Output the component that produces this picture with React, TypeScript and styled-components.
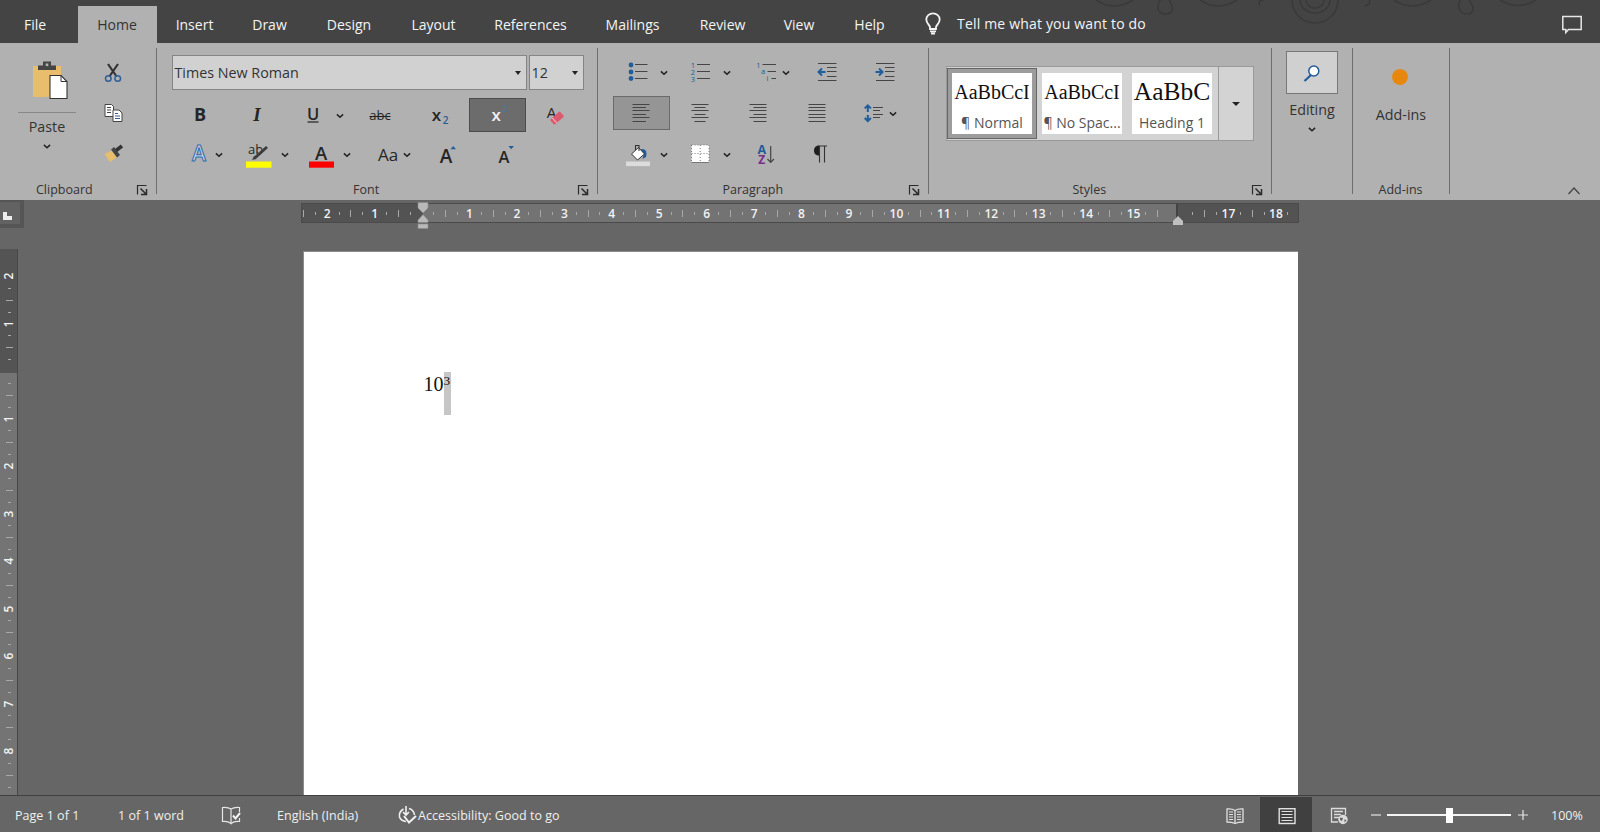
import type { ReactNode } from 'react';
import styled, { createGlobalStyle, css } from 'styled-components';


const MENU = [
  { title: 'File', left: 24, width: 22 },
  { title: 'Home', left: 32, width: 79, active: true },
  { title: 'Insert', left: 19, width: 37 },
  { title: 'Draw', left: 39, width: 35 },
  { title: 'Design', left: 39, width: 46 },
  { title: 'Layout', left: 39, width: 45 },
  { title: 'References', left: 39, width: 71 },
  { title: 'Mailings', left: 38, width: 57 },
  { title: 'Review', left: 38, width: 47 },
  { title: 'View', left: 37, width: 32 },
  { title: 'Help', left: 39, width: 31 },
];

const range = (from: number, to: number) => Array.from({ length: to - from + 1 }, (_, i) => from + i)

type IconPropsType = {
  w?: number
  h?: number
  children: ReactNode
}

// every icon is drawn round its own centre
const Icon = ({ w = 30, h = 34, children }: IconPropsType) => (
  <Svg width={ w } height={ h } viewBox={ `${ -w / 2 } ${ -h / 2 } ${ w } ${ h }` }>{ children }</Svg>
);

type CaretPropsType = {
  ml?: number
  h?: number
}

const Caret = ({ ml = 0, h = 34 }: CaretPropsType) => (
  <Tool $ml={ ml } $w={ 10 }>
    <Icon w={ 10 } h={ h }><path d="M-3.1 -.6 L0 2.3 L3.1 -.6" fill="none" stroke="#222" strokeWidth="1.5"/></Icon>
  </Tool>
);

const Launcher = () => (
  <Icon w={ 12 } h={ 12 }>
    <path d="M-4.5 4.5V-4.5H4.5" fill="none" stroke="#2b2b2b" strokeWidth="1.2"/>
    <path d="M-1.5 -1.5L4 4M4.5 -1V4.5H-1" fill="none" stroke="#2b2b2b" strokeWidth="1.5"/>
  </Icon>
);

type LinesPropsType = {
  rows: [number, number, number][]
}

const Lines = ({ rows }: LinesPropsType) => (
  <path d={ rows.map(([x1, x2, y]) => `M${ x1 } ${ y }H${ x2 }`).join('') } stroke="#454545" strokeWidth="1"/>
);

type MarksPropsType = {
  from: number
  to: number
  vertical?: boolean
  hidden?: number[]
}

const Marks = ({ from, to, vertical, hidden = [0] }: MarksPropsType) => (
  <>
    { range(from, to).map(k => (
      <Mark key={ k } $vertical={ vertical }>
        { hidden.includes(k) ? null : k % 4 === 0
          ? <Digit $vertical={ vertical }>{ Math.abs(k / 4) }</Digit>
          : <Tick $long={ k % 2 === 0 } $vertical={ vertical }/> }
      </Mark>
    )) }
  </>
);

const TitleBar = () => (
  <Bar>
    { MENU.map(item => (
      <Tab key={ item.title } $left={ item.left } $width={ item.width } $active={ item.active }>{ item.title }</Tab>
    )) }
    <Bulb>
      <Icon w={ 20 } h={ 26 }>
        <path d="M-3 5V3C-3.5 1-6.7-1-6.7-4.5A6.7 6.2 0 0 1 6.7-4.5C6.7-1 3.5 1 3 3V5Z" fill="none" stroke="#f4f4f4" strokeWidth="1.8"/>
        <path d="M-3 7.3H3M-2 9.5H2" stroke="#f4f4f4" strokeWidth="1.8"/>
      </Icon>
    </Bulb>
    <Search>Tell me what you want to do</Search>
    <Ornament width="480" height="43" viewBox="0 0 480 43" fill="none" stroke="#3a3a3a" strokeWidth="1.6">
      <path d="M36 0Q54 12 73 0M100 0C96 8 98 14 106 14S114 7 109 0M140 0Q158 12 177 0M200 6Q197 0 204 0M232 0A23 23 0 0 0 278 0M240 0A15 13 0 0 0 270 0M246 0A9 8 0 0 0 264 0M305 6Q312 4 309 0M334 0Q352 12 371 0M400 0C397 8 400 14 407 14S415 7 409 0M440 0Q458 11 476 0"/>
    </Ornament>
    <Comment>
      <Icon w={ 22 } h={ 20 }>
        <path d="M-9.2-7.5H9.2V5.5H-3.5L-6.2 8.5V5.5H-9.2Z" fill="none" stroke="#e6e6e6" strokeWidth="1.5"/>
      </Icon>
    </Comment>
  </Bar>
);

const Clipboard = () => (
  <Group $w={ 156 }>
    <Body $row>
      <Paste>
        <PasteIcon>
          <Icon w={ 40 } h={ 42 }>
            <path d="M-17-14H11V17H-17Z" fill="#e8bd6c"/>
            <path d="M-12-10V-14.5H-7V-18.5H1V-14.5H6V-10Z" fill="#444"/>
            <rect x="-4.3" y="-16.5" width="2.6" height="2.6" fill="#b1b1b1"/>
            <path d="M0-4.5H11L17 1.5V18.5H0Z" fill="#fff" stroke="#333" strokeWidth="1.1"/>
            <path d="M11-4.5V1.5H17" fill="none" stroke="#333" strokeWidth="1"/>
          </Icon>
        </PasteIcon>
        <Rule/>
        <BigLabel $top={ 3.5 }>Paste</BigLabel>
        <Caret h={ 17 }/>
      </Paste>
      <Stack>
        <Icon h={ 40 }>
          <path d="M-5-9L3.6 3.5M5-9L-3.6 3.5" stroke="#333" strokeWidth="2.2"/>
          <g fill="none" stroke="#2f5f9a" strokeWidth="1.5"><circle cx="-4.7" cy="5.5" r="2.8"/><circle cx="4.7" cy="5.5" r="2.8"/></g>
        </Icon>
        <Icon h={ 40 }>
          <g fill="#fff" stroke="#444" strokeWidth="1">
            <path d="M-8-8.5H-1.5L.5-6.5V3.5H-8Z"/><path d="M0-3H6L9 0V8.5H0Z"/>
          </g>
          <path d="M-6-5.5H-2M-6-3H-2M-6-.5H-2" stroke="#444"/>
          <path d="M2 .5H5M2 3H7M2 5.5H7" stroke="#2f5f9a"/>
        </Icon>
        <Icon h={ 40 }>
          <g transform="translate(1 .5)">
            <path d="M-9.5 .5L-2.5-3L3 4L-4 8.5Q-7 4-9.5 .5Z" fill="#e8bd6c"/>
            <path d="M-3-4L0-6.5L6 1.5L3 4Z" fill="#444"/>
            <path d="M2-3L8-7.5" stroke="#333" strokeWidth="3.6"/>
          </g>
        </Icon>
      </Stack>
    </Body>
    <Footer><FooterLabel $left={ 36 } $w={ 58 }>Clipboard</FooterLabel><Launcher/></Footer>
  </Group>
);

const Font = () => (
  <Group $w={ 440 }>
    <Body>
      <Combos>
        <Combo $w={ 355 }>Times New Roman<Arrow/></Combo>
        <Combo $w={ 55 }>12<Arrow/></Combo>
      </Combos>
      <Row $top={ 7.5 }>
        <Tool $ml={ 28 }><Icon><Glyph y="5.6" $size={ 18 } $bold>B</Glyph></Icon></Tool>
        <Tool $ml={ 27 }><Icon><Glyph y="5.6" $size={ 19 } $bold $serif $italic>I</Glyph></Icon></Tool>
        <Tool $ml={ 26 }><Icon><Glyph y="4.8" $size={ 16.5 } $semi>U</Glyph><path d="M-5.5 7H5.5" stroke="#222" strokeWidth="1.2"/></Icon></Tool>
        <Caret ml={ 7 }/>
        <Tool $ml={ 20 }><Icon><Glyph y="5" $size={ 13 }>abc</Glyph><path d="M-10.5 1.5H10.5" stroke="#222" strokeWidth="1.1"/></Icon></Tool>
        <Tool $ml={ 30 }><Icon><Glyph x="-3.5" y="5.5" $size={ 17 } $semi>x</Glyph><Glyph x="5.5" y="9" $size={ 10 } $fill="#205d9b" $semi>2</Glyph></Icon></Tool>
        <Pressed $ml={ 14 } $dark>
          <Icon w={ 54 } h={ 30 }><Glyph x="-1.8" y="5.5" $size={ 17 } $fill="#f2f2f2" $semi>x</Glyph><Glyph x="7" y="-3" $size={ 9.5 } $fill="#4677ad">2</Glyph></Icon>
        </Pressed>
        <Tool $ml={ 15 }>
          <Icon>
            <Glyph x="-3.5" y="2.5" $size={ 15 }>A</Glyph>
            <g transform="translate(2 3) rotate(-42)"><rect x="-6.5" y="-3.3" width="13" height="6.8" rx="1" fill="#db5a6e"/><path d="M-3.5-3.3V3.5" stroke="#f0b6bf"/></g>
          </Icon>
        </Tool>
      </Row>
      <Row $top={ 5.5 }>
        <Tool $ml={ 27 }><Icon><Outline y="7.4">A</Outline></Icon></Tool>
        <Caret/>
        <Tool $ml={ 19 }>
          <Icon>
            <Glyph x="-2.5" y="-.5" $size={ 13 }>ab</Glyph>
            <path d="M-3.5 4.2L9-7" stroke="#3d3d3d" strokeWidth="3"/><path d="M-6 6L-4 2.3L-1.5 5Z" fill="#3d3d3d"/>
            <rect x="-12" y="7.5" width="25.5" height="6.2" fill="#ff0"/>
          </Icon>
        </Tool>
        <Caret ml={ 6.5 }/>
        <Tool $ml={ 16.5 }><Icon><Glyph y="6.3" $size={ 18.5 } $semi>A</Glyph><rect x="-12" y="7.5" width="25" height="6.2" fill="#f00"/></Icon></Tool>
        <Caret ml={ 6 }/>
        <Tool $ml={ 21 }><Icon><Glyph y="6.5" $size={ 17 }>Aa</Glyph></Icon></Tool>
        <Caret ml={ -1 }/>
        <Tool $ml={ 21 }><Icon><Glyph x="-2" y="8.8" $size={ 19 } $semi>A</Glyph><path d="M2.5-4.8H8L5.2-8Z" fill="#205d9b"/></Icon></Tool>
        <Tool $ml={ 28 }><Icon><Glyph x="-2" y="9" $size={ 16.5 } $semi>A</Glyph><path d="M2.5-8H8L5.2-4.8Z" fill="#205d9b"/></Icon></Tool>
      </Row>
    </Body>
    <Footer><FooterLabel $left={ 196 } $w={ 27 }>Font</FooterLabel><Launcher/></Footer>
  </Group>
);

const Paragraph = () => (
  <Group $w={ 330 }>
    <Body>
      <Row $top={ 12 }>
        <Tool $ml={ 24.5 }>
          <Icon>
            <g fill="#205d9b"><circle cx="-7" cy="-7" r="2.4"/><circle cx="-7" r="2.4"/><circle cx="-7" cy="6.5" r="2.4"/></g>
            <Lines rows={ [[-3, 9.5, -7.5], [-3, 9.5, -.5], [-3, 9.5, 6.5]] }/>
          </Icon>
        </Tool>
        <Caret ml={ 6 }/>
        <Tool $ml={ 17.5 }>
          <Icon>
            <Glyph x="-8" y="-3.8" $size={ 7.5 } $fill="#205d9b">1</Glyph><Glyph x="-8" y="2.8" $size={ 7.5 } $fill="#205d9b">2</Glyph><Glyph x="-8" y="9.6" $size={ 7.5 } $fill="#205d9b">3</Glyph>
            <Lines rows={ [[-4, 9, -7.5], [-4, 9, -.5], [-4, 9, 6.5]] }/>
          </Icon>
        </Tool>
        <Caret ml={ 5.5 }/>
        <Tool $ml={ 19.5 }>
          <Icon>
            <Glyph x="-7.5" y="-3.8" $size={ 7.5 } $fill="#205d9b">1</Glyph><Glyph x="-3" y="2.2" $size={ 7.5 } $fill="#205d9b">a</Glyph><Glyph x="1.5" y="9.2" $size={ 7.5 } $fill="#205d9b">i</Glyph>
            <Lines rows={ [[-3.5, 10, -7.5], [1.5, 10, -.5], [5.5, 10, 6.5]] }/>
          </Icon>
        </Tool>
        <Caret/>
        <Tool $ml={ 20.5 }>
          <Icon>
            <Lines rows={ [[-9, 9.5, -8.5], [0, 9.5, -4.5], [0, 9.5, -.5], [0, 9.5, 4.5], [-9, 9.5, 8.5]] }/>
            <path d="M-1.5 0H-8M-5-3.5L-8.5 0L-5 3.5" fill="none" stroke="#205d9b" strokeWidth="2"/>
          </Icon>
        </Tool>
        <Tool $ml={ 28.5 }>
          <Icon>
            <Lines rows={ [[-9, 9.5, -8.5], [0, 9.5, -4.5], [0, 9.5, -.5], [0, 9.5, 4.5], [-9, 9.5, 8.5]] }/>
            <path d="M-9.5 0H-3M-6-3.5L-2.5 0L-6 3.5" fill="none" stroke="#205d9b" strokeWidth="2"/>
          </Icon>
        </Tool>
      </Row>
      <Row $top={ 7 }>
        <Pressed $ml={ 14.5 }>
          <Icon w={ 54 } h={ 30 }><Lines rows={ [[-8.5, 8.5, -8.5], [-8.5, 5, -5.5], [-8.5, 8.5, -2.5], [-8.5, 5, 1.5], [-8.5, 8.5, 4.5], [-8.5, 5, 8.5]] }/></Icon>
        </Pressed>
        <Tool $ml={ 16 }><Icon><Lines rows={ [[-8.5, 8.5, -8.5], [-5.5, 5.5, -5.5], [-8.5, 8.5, -2.5], [-5.5, 5.5, 1.5], [-8.5, 8.5, 4.5], [-5.5, 5.5, 8.5]] }/></Icon></Tool>
        <Tool $ml={ 28.5 }><Icon><Lines rows={ [[-8.5, 8.5, -8.5], [-4.5, 8.5, -5.5], [-8.5, 8.5, -2.5], [-4.5, 8.5, 1.5], [-8.5, 8.5, 4.5], [-4.5, 8.5, 8.5]] }/></Icon></Tool>
        <Tool $ml={ 28.5 }><Icon><Lines rows={ [-8.5, -5.5, -2.5, 1.5, 4.5, 8.5].map(y => [-8.5, 8.5, y]) }/></Icon></Tool>
        <Tool $ml={ 27.5 }>
          <Icon>
            <path d="M-6.2-1V-7M-9.3-4.6L-6.2-7.7L-3.1-4.6M-6.2 2V8M-9.3 5L-6.2 8L-3.1 5" fill="none" stroke="#205d9b" strokeWidth="2"/>
            <Lines rows={ [[-1, 9, -5.5], [-1, 6, -2.5], [-1, 9, 1.5], [-1, 6, 4.5]] }/>
          </Icon>
        </Tool>
        <Caret ml={ -1 }/>
      </Row>
      <Row $top={ 7 }>
        <Tool $ml={ 24.5 }>
          <Icon>
            <path d="M4-5Q10-5 8 3L4.5 5Q7-1 2-4Z" fill="#205d9b"/>
            <path d="M-6.5 0L.5-6.5L6.5 0L-.5 6Z" fill="#fff" stroke="#333" strokeWidth="1"/>
            <path d="M-2.5-4V-8.5H1V-3" fill="none" stroke="#333" strokeWidth="1.1"/>
            <rect x="-12" y="7.5" width="24" height="4.6" fill="#dcdcdc"/>
          </Icon>
        </Tool>
        <Caret ml={ 6 }/>
        <Tool $ml={ 16.5 }>
          <Icon>
            <rect x="-8.5" y="-9" width="17.5" height="17" fill="#fff"/>
            <path d="M-8.5-9H9M-8.5-9V8M9-9V8M-8.5-.5H9M.2-9V8" stroke="#777" strokeDasharray="1 2" fill="none"/>
            <path d="M-8.5 8.5H9" stroke="#777"/>
          </Icon>
        </Tool>
        <Caret ml={ 6.5 }/>
        <Tool $ml={ 18.5 }>
          <Icon>
            <Glyph x="-3.2" y="0" $size={ 12.5 } $fill="#205d9b" $bold>A</Glyph><Glyph x="-3.2" y="9.5" $size={ 12 } $fill="#7a2d8c" $bold>Z</Glyph>
            <path d="M5.7-8V8M2.5 5L5.7 8.3L8.9 5" fill="none" stroke="#444" strokeWidth="1.2"/>
          </Icon>
        </Tool>
        <Tool $ml={ 25 }>
          <Icon>
            <path d="M-1-8.5V1.5C-5 1.5-6-1-6-3.5S-4.5-8.5-1-8.5Z" fill="#1e1e1e"/>
            <path d="M-2-8H7M-.5-8V8.5M4.5-8V8.5" stroke="#333" strokeWidth="1.1"/>
          </Icon>
        </Tool>
      </Row>
    </Body>
    <Footer><FooterLabel $left={ 124.5 } $w={ 60 }>Paragraph</FooterLabel><Launcher/></Footer>
  </Group>
);

const Styles = () => (
  <Group $w={ 342 }>
    <Body>
      <Gallery>
        <Card $active><Sample>AaBbCcI</Sample><CardName>¶ Normal</CardName></Card>
        <Card><Sample>AaBbCcI</Sample><CardName>¶ No Spac...</CardName></Card>
        <Card><Sample $big>AaBbC</Sample><CardName>Heading 1</CardName></Card>
        <More><Arrow $big/></More>
      </Gallery>
    </Body>
    <Footer><FooterLabel $left={ 143.5 } $w={ 35 }>Styles</FooterLabel><Launcher/></Footer>
  </Group>
);

const Editing = () => (
  <Group $w={ 80 }>
    <Find>
      <Icon>
        <path d="M-.5 1.5L-7.5 8" stroke="#205d9b" strokeWidth="2.2"/>
        <circle cx="1.8" cy="-2" r="5" fill="#fff" stroke="#205d9b" strokeWidth="1.5"/>
      </Icon>
    </Find>
    <BigLabel $top={ 5.5 }>Editing</BigLabel>
    <Caret h={ 17 }/>
  </Group>
);

const AddIns = () => (
  <Group $w={ 96 }>
    <Dot/>
    <BigLabel $top={ 20 }>Add-ins</BigLabel>
    <Footer $bottom><FooterLabel $left={ 25.5 } $w={ 46 }>Add-ins</FooterLabel></Footer>
  </Group>
);

const StatusBar = () => (
  <Status>
    <Info $left={ 15 } $w={ 65 }>Page 1 of 1</Info>
    <Info $left={ 38 } $w={ 67 }>1 of 1 word</Info>
    <Info $left={ 36 } $w={ 20 }>
      <Icon w={ 20 } h={ 22 }>
        <path d="M0-6Q-3-8-8.5-7.5V6.5Q-3 6 0 8.5V-6Q3-8 8.5-7.5V-3M8.5 3V6.5Q3 6 0 8.5" fill="none" stroke="#e6e6e6" strokeWidth="1.2"/>
        <path d="M2 .5L4.5 3.5L9-2" fill="none" stroke="#f2f2f2" strokeWidth="2"/>
      </Icon>
    </Info>
    <Info $left={ 36 } $w={ 84 }>English (India)</Info>
    <Info $left={ 36 } $w={ 21 }>
      <Icon w={ 20 } h={ 24 }>
        <path d="M-3.5-6Q-8.5-3-7.5 2Q-6 6-1 6.5M-1-9V0M-4-3L-1 0L2-3M2-6.5Q7-5 7.5 0" fill="none" stroke="#f0f0f0" strokeWidth="1.6"/>
        <path d="M-3 1L2 7.5L9 1" fill="none" stroke="#f0f0f0" strokeWidth="2"/>
      </Icon>
    </Info>
    <Info $w={ 144 }>Accessibility: Good to go</Info>
    <Views>
      <View>
        <Icon w={ 20 } h={ 22 }>
          <path d="M0-5.5Q-3-7.5-8-7V6Q-3 6 0 7.5Q3 6 8 6V-7Q3-7.5 0-5.5V7.5" fill="none" stroke="#e0e0e0" strokeWidth="1.3"/>
          <path d="M-6-4H-2M-6-1.5H-2M-6 1H-2M-6 3.5H-2M2-4H6M2-1.5H6M2 1H6M2 3.5H6" stroke="#e0e0e0"/>
        </Icon>
      </View>
      <View $active>
        <Icon w={ 20 } h={ 22 }>
          <rect x="-7.8" y="-7.3" width="15.8" height="14.8" fill="none" stroke="#e0e0e0" strokeWidth="1.4"/>
          <path d="M-5.5-4.5H5.5M-5.5-1.5H5.5M-5.5 1.5H5.5M-5.5 4.5H5.5" stroke="#e0e0e0"/>
        </Icon>
      </View>
      <View>
        <Icon w={ 20 } h={ 22 }>
          <path d="M-1 6H-7.5V-7.5H6.5V-1M-5-4.5H4M-5-1.5H2M-5 1.5H0" fill="none" stroke="#dcdcdc" strokeWidth="1.3"/>
          <circle cx="4" cy="3.5" r="4.7" fill="#dcdcdc"/>
          <path d="M1 1.5L4 2L3 5L1 4ZM5.5 3L7.5 4.5L5.5 6.5Z" fill="#666"/>
        </Icon>
      </View>
    </Views>
    <Zoom>
      <Icon w={ 12 } h={ 12 }><path d="M-5 0H5" stroke="#e6e6e6" strokeWidth="1.2"/></Icon>
      <Track><Thumb/></Track>
      <Icon w={ 12 } h={ 12 }><path d="M-5 0H5M0-5V5" stroke="#e6e6e6" strokeWidth="1.2"/></Icon>
      <Percent>100%</Percent>
    </Zoom>
  </Status>
);

const App = () => (
  <Window>
    <GlobalStyle/>
    <TitleBar/>
    <Ribbon>
      <Clipboard/><Divider/>
      <Font/><Divider/>
      <Paragraph/><Divider/>
      <Styles/><Divider/>
      <Editing/><Divider/>
      <AddIns/><Divider/>
      <Collapse><Icon w={ 14 } h={ 12 }><path d="M-5.5 3L0-3L5.5 3" fill="none" stroke="#444" strokeWidth="1.3"/></Icon></Collapse>
    </Ribbon>
    <Workspace>
      <LeftSide>
        <TabStop><Corner/></TabStop>
        <VerticalRuler><Marks from={ -8 } to={ 35 } vertical/></VerticalRuler>
      </LeftSide>
      <Center>
        <Ruler>
          <Scale><Marks from={ -10 } to={ 73 } hidden={ [0, 63, 64] }/></Scale>
          <Handle $x={ 116 } $y={ -1 }>
            <Icon w={ 12 } h={ 28 }>
              <path d="M-5-14.5H5V-9L0-4L-5-9ZM-5 5.5V3L0-2.5L5 3V5.5ZM-5 7H5V11.5H-5Z" fill="#b9b9b9" stroke="#8a8a8a" strokeWidth=".6"/>
            </Icon>
          </Handle>
          <Handle $x={ 871 } $y={ 10 }>
            <Icon w={ 12 } h={ 12 }><path d="M-5 5V1L0-4L5 1V5Z" fill="#c0c0c0"/></Icon>
          </Handle>
        </Ruler>
        <Page>
          <Line>10<Power>3</Power></Line>
        </Page>
      </Center>
    </Workspace>
    <StatusBar/>
  </Window>
);

export default App;

const GlobalStyle = createGlobalStyle`
  * {
    box-sizing: border-box;
  }
  body {
    margin: 0;
    overflow: hidden;
    font-family: "Open Sans", "Noto Sans", sans-serif;
  }
`;

const Window = styled.div`
  display: flex;
  flex-direction: column;
  width: 1600px;
  height: 832px;
  overflow: hidden;
  background-color: #666666;
`;

const Svg = styled.svg`
  display: block;
  flex: none;
  overflow: visible;
`;

const Bar = styled.header`
  position: relative;
  display: flex;
  height: 43px;
  flex: none;
  padding-top: 6px;
  background-color: #444444;
  color: #f4f4f4;
`;
const Tab = styled.div<{ $left: number, $width: number, $active?: boolean }>`
  display: flex;
  justify-content: center;
  width: ${ p => p.$width }px;
  margin-left: ${ p => p.$left }px;
  padding-top: 7px;
  font-size: 14px;
  line-height: 24px;
  white-space: nowrap;
  ${ p => p.$active && css`
    padding-right: 1px;
    background-color: #b1b1b1;
    color: #333333;
  ` }
`;
const Bulb = styled.div`
  margin: 5px 0 0 38px;
`;
const Search = styled.div`
  width: 190px;
  margin-left: 14px;
  padding-top: 6px;
  font-size: 14px;
  letter-spacing: 0.18px;
  line-height: 24px;
  white-space: nowrap;
`;
const Ornament = styled.svg`
  position: absolute;
  top: 0;
  left: 1060px;
`;
const Comment = styled.div`
  margin: 8px 17px 0 auto;
`;

const Ribbon = styled.section`
  display: flex;
  height: 157px;
  flex: none;
  background-color: #b1b1b1;
  color: #333333;
`;
const Group = styled.div<{ $w: number }>`
  display: flex;
  flex-direction: column;
  align-items: center;
  flex: none;
  width: ${ p => p.$w }px;
`;
const Divider = styled.div`
  flex: none;
  width: 1px;
  height: 146px;
  margin-top: 5px;
  background-color: #6e6e6e;
`;
const Body = styled.div<{ $row?: boolean }>`
  display: flex;
  flex-direction: ${ p => p.$row ? 'row' : 'column' };
  width: 100%;
  height: 137px;
`;
const Footer = styled.div<{ $bottom?: boolean }>`
  display: flex;
  align-items: center;
  justify-content: space-between;
  width: 100%;
  height: 20px;
  padding-right: 8.5px;
  ${ p => p.$bottom && 'margin-top: auto;' }
`;
const FooterLabel = styled.span<{ $left: number, $w: number }>`
  width: ${ p => p.$w }px;
  margin-left: ${ p => p.$left }px;
  font-size: 12.5px;
  line-height: 18px;
  white-space: nowrap;
`;

const Paste = styled.div`
  display: flex;
  flex-direction: column;
  align-items: center;
  width: 58px;
  margin-left: 18px;
  padding-top: 16px;
`;
const PasteIcon = styled.div`
  padding-left: 5px;
`;
const Rule = styled.div`
  width: 58px;
  height: 1px;
  margin-top: 11px;
  background-color: #888888;
`;
const BigLabel = styled.div<{ $top: number }>`
  margin-top: ${ p => p.$top }px;
  font-size: 14.3px;
  line-height: 20px;
  white-space: nowrap;
`;
const Stack = styled.div`
  display: flex;
  flex-direction: column;
  padding: 9.5px 0 0 21.5px;
`;

const Row = styled.div<{ $top: number }>`
  display: flex;
  align-items: center;
  height: 34px;
  margin-top: ${ p => p.$top }px;
`;
const Tool = styled.div<{ $ml?: number, $w?: number }>`
  flex: none;
  width: ${ p => p.$w ?? 30 }px;
  margin-left: ${ p => p.$ml ?? 0 }px;
`;
const Pressed = styled(Tool)<{ $dark?: boolean }>`
  display: flex;
  align-items: center;
  justify-content: center;
  width: 57px;
  height: 34px;
  margin-right: -1px;
  border: 1px solid ${ p => p.$dark ? '#4c4c4c' : '#6a6a6a' };
  background-color: ${ p => p.$dark ? '#6c6c6c' : '#959595' };
`;
type GlyphPropsType = {
  $size: number
  $fill?: string
  $bold?: boolean
  $semi?: boolean
  $serif?: boolean
  $italic?: boolean
}
const Glyph = styled.text<GlyphPropsType>`
  text-anchor: middle;
  fill: ${ p => p.$fill ?? '#262626' };
  font-size: ${ p => p.$size }px;
  font-weight: ${ p => p.$bold ? 700 : p.$semi ? 600 : 400 };
  font-style: ${ p => p.$italic ? 'italic' : 'normal' };
  font-family: ${ p => p.$serif ? '"Liberation Serif", serif' : '"Open Sans", sans-serif' };
`;
const Outline = styled.text`
  text-anchor: middle;
  fill: #c4d4e6;
  stroke: #2f6bad;
  stroke-width: 1;
  font-size: 21px;
  font-weight: 600;
`;

const Combos = styled.div`
  display: flex;
  gap: 2px;
  margin: 12px 0 0 14.5px;
`;
const Combo = styled.div<{ $w: number }>`
  display: flex;
  align-items: center;
  justify-content: space-between;
  width: ${ p => p.$w }px;
  height: 35px;
  padding: 0 5px 0 2px;
  border: 1px solid #858585;
  background-color: #d1d1d1;
  font-size: 14.3px;
`;
const Arrow = styled.i<{ $big?: boolean }>`
  width: 0;
  border: ${ p => p.$big ? 4 : 3 }px solid transparent;
  border-top: 4px solid #222222;
  border-bottom: 0;
`;

const Gallery = styled.div`
  display: flex;
  width: 308px;
  height: 75px;
  margin: 23px 0 0 17px;
  border: 1px solid #999999;
  background-color: #d3d3d3;
`;
const Card = styled.div<{ $active?: boolean }>`
  display: flex;
  flex-direction: column;
  align-items: center;
  width: 90px;
  height: 71px;
  margin-top: 1px;
  padding: 4px;
  border: 1px solid ${ p => p.$active ? '#666666' : 'transparent' };
  background: linear-gradient(#fff, #fff) center / 80px 61px no-repeat ${ p => p.$active ? '#9c9c9c' : 'transparent' };
`;
const Sample = styled.div<{ $big?: boolean }>`
  height: 38px;
  font-family: "Liberation Serif", serif;
  font-size: ${ p => p.$big ? 25.5 : 20 }px;
  line-height: 38px;
  color: #111111;
  white-space: nowrap;
`;
const CardName = styled.div`
  font-size: 14px;
  line-height: 24px;
  color: #555555;
  white-space: nowrap;
`;
const More = styled.div`
  display: flex;
  align-items: center;
  justify-content: center;
  flex: 1;
  margin-left: 1px;
  padding-right: 1px;
  border-left: 1px solid #999999;
`;

const Find = styled.div`
  display: flex;
  align-items: center;
  justify-content: center;
  width: 52px;
  height: 43px;
  margin-top: 8px;
  border: 1.5px solid #777777;
  background-color: #d0d0d0;
`;
const Dot = styled.div`
  width: 16px;
  height: 16px;
  margin-top: 26px;
  margin-right: 2px;
  border-radius: 50%;
  background: radial-gradient(circle, #e8870e 60%, #d19a53 100%);
`;
const Collapse = styled.div`
  margin: 142px 19px 0 auto;
`;

const Workspace = styled.main`
  display: flex;
  height: 595px;
  flex: none;
`;
const LeftSide = styled.div`
  display: flex;
  flex-direction: column;
  width: 301px;
`;
const TabStop = styled.div`
  display: flex;
  width: 24px;
  height: 28px;
  padding: 12px 0 0 3px;
  border: solid #555555;
  border-width: 2px 4px 4px 0;
  background-color: #626262;
`;
const Corner = styled.i`
  width: 9px;
  height: 8px;
  margin-top: -2px;
  border: solid #ededed;
  border-width: 0 0 4px 4px;
`;
const VerticalRuler = styled.div`
  display: flex;
  flex-direction: column;
  width: 18px;
  height: 546px;
  margin-top: 21px;
  padding-top: 21.5px;
  overflow: hidden;
  border-right: 1px solid #484848;
  background: linear-gradient(#545454 124px, #747474 124px);
`;

const Center = styled.div`
  display: flex;
  flex-direction: column;
  width: 998px;
`;
const Ruler = styled.div`
  position: relative;
  height: 20px;
  margin-top: 3px;
  border: 1px solid #4a4a4a;
  background: linear-gradient(90deg, #535353 121px, #737373 121px, #737373 874px, #444444 874px, #444444 876px, #535353 876px);
`;
const Scale = styled.div`
  display: flex;
  align-items: center;
  height: 100%;
  padding-top: 1px;
  overflow: hidden;

  > :first-child {
    margin-left: -4.5px;
  }
`;
const Mark = styled.div<{ $vertical?: boolean }>`
  display: flex;
  align-items: center;
  justify-content: center;
  flex: none;
  ${ p => p.$vertical ? 'width: 18px; height: 11.88px;' : 'width: 11.867px; height: 18px;' }
`;
const Digit = styled.span<{ $vertical?: boolean }>`
  font-size: 12px;
  font-weight: 600;
  line-height: 12px;
  color: #f2f2f2;
  ${ p => p.$vertical && 'transform: rotate(-90deg);' }
`;
const Tick = styled.i<{ $long: boolean, $vertical?: boolean }>`
  width: ${ p => p.$vertical ? (p.$long ? 7 : 3) : 1 }px;
  height: ${ p => p.$vertical ? 1 : (p.$long ? 7 : 3) }px;
  background-color: #a8a8a8;
`;
const Handle = styled.div<{ $x: number, $y: number }>`
  position: absolute;
  top: ${ p => p.$y }px;
  left: ${ p => p.$x - 1 }px;
`;

const Page = styled.article`
  flex: 1;
  margin: 28px 1px 0 2px;
  padding: 120px 0 0 119.5px;
  border: solid #8c8c8c;
  border-width: 1px 0 0 1px;
  background-color: #ffffff;
`;
const Line = styled.div`
  display: flex;
  font-family: "Liberation Serif", serif;
  font-size: 20px;
  line-height: 24px;
  color: #111111;
`;
const Power = styled.span`
  width: 7px;
  height: 43px;
  background-color: #c6c6c6;
  font-size: 13.3px;
  line-height: 17px;
`;

const Status = styled.footer`
  display: flex;
  align-items: center;
  flex: 1;
  padding-top: 2px;
  border-top: 1px solid #404040;
  color: #f0f0f0;
  font-size: 12.5px;
`;
const Info = styled.div<{ $left?: number, $w: number }>`
  flex: none;
  width: ${ p => p.$w }px;
  margin-left: ${ p => p.$left ?? 0 }px;
  padding-bottom: 2px;
  letter-spacing: 0.03px;
  white-space: nowrap;
`;
const Views = styled.div`
  display: flex;
  height: 100%;
  margin: -2px 0 0 auto;
`;
const View = styled.div<{ $active?: boolean }>`
  display: flex;
  align-items: center;
  justify-content: center;
  width: 52px;
  height: 38px;
  padding-left: 1px;
  background-color: ${ p => p.$active ? '#404040' : 'transparent' };
`;
const Zoom = styled.div`
  display: flex;
  align-items: center;
  width: 230px;
  padding-bottom: 2px;
  margin-left: 6px;
`;
const Track = styled.div`
  display: flex;
  align-items: center;
  width: 124px;
  height: 2px;
  margin: 0 6px 0 5px;
  background-color: #f4f4f4;
`;
const Thumb = styled.i`
  width: 7px;
  height: 15px;
  margin-left: 59px;
  background-color: #ffffff;
`;
const Percent = styled.span`
  margin-left: 22px;
`;
